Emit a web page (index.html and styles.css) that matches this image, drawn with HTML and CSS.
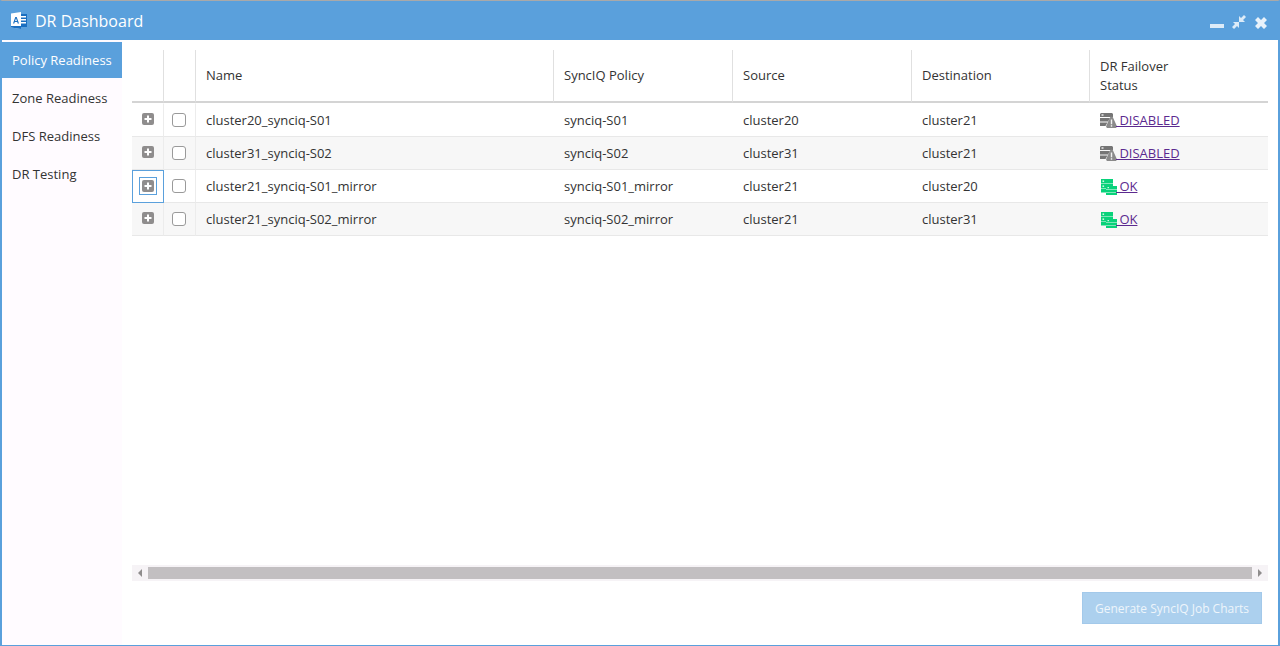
FILE: index.html
```html
<!DOCTYPE html>
<html lang="en">
<head>
<meta charset="utf-8">
<title>DR Dashboard</title>
<link rel="stylesheet" href="styles.css">
</head>
<body>
<svg class="defs" width="0" height="0" aria-hidden="true">
  <defs>
    <symbol id="plus" viewBox="0 0 12 12">
      <rect width="12" height="12" rx="2" fill="#8f8d8d"/>
      <path d="M5 2.500h2V5h2.500v2H7v2.500H5V7H2.500V5H5z" fill="#fff"/>
    </symbol>
    <symbol id="warn" viewBox="0 0 17 15">
      <path d="M1 0h11l1 1v3H0V1z" fill="#757575"/>
      <path d="M0 5h10L8 8.500H0z" fill="#757575"/>
      <path d="M0 9.500h7.500L5.500 13H0z" fill="#757575"/>
      <rect x="1.500" y="1.200" width="2" height="1.600" fill="#e2e2e2"/>
      <path d="M11.500 3.500c.7 0 1.200.4 1.500.9l3.700 8.300c.5 1.100-.2 2.300-1.400 2.300H7.700c-1.200 0-1.900-1.200-1.400-2.300L10 4.400c.3-.5.800-.9 1.500-.9z" fill="#8a8a8a"/>
      <rect x="10.800" y="6.500" width="1.400" height="4.800" fill="#f2f2f2"/>
      <rect x="10.800" y="12.200" width="1.400" height="1.500" fill="#f2f2f2"/>
    </symbol>
    <symbol id="okay" viewBox="0 0 16 16">
      <path d="M0 0h12v4.400H0zM0 5h12v2H5v2.400H0zM0 10h5v3.500H0z" fill="#08d27a"/>
      <path d="M5 7h11v3.200H5zM5 10.800h11v2.600H5zM5 14h11v2H5z" fill="#08d27a"/>
      <rect x="1.500" y="1.400" width="1.600" height="1.600" fill="#c9f7e1"/>
      <rect x="1.500" y="6.400" width="1.600" height="1.600" fill="#c9f7e1"/>
      <rect x="6.500" y="8" width="1.500" height="1.200" fill="#c9f7e1"/>
    </symbol>
  </defs>
</svg>
<div class="window">
  <header class="titlebar">
    <div class="title">
      <svg class="app-icon" width="16" height="17" viewBox="0 0 16 17" aria-hidden="true">
        <path d="M9 2h7v13H9z" fill="#1a6fc0"/>
        <path d="M10 4h5v1.500h-5zM10 7h5v1.500h-5zM10 10h5v1.500h-5z" fill="#fff"/>
        <path d="M0 1.500 10 0v17L0 15.500z" fill="#fff"/>
        <path d="M0 14h10v3L0 15.500z" fill="#1a6fc0"/>
        <path d="M2 11.500 4.300 5h1.400L8 11.500H6.700l-.5-1.500H3.800l-.5 1.500zM4.100 9h1.800L5 6.300z" fill="#1a6fc0"/>
      </svg>
      <span>DR Dashboard</span>
    </div>
    <div class="controls">
      <svg class="ctl-min" width="14" height="4" viewBox="0 0 14 4" aria-hidden="true"><rect width="14" height="4" fill="#dcebf8"/></svg>
      <svg class="ctl-restore" width="14" height="14" viewBox="0 0 14 14" aria-hidden="true"><path d="M12 0l2 2-3 3 2 2H7V1l2 2zM1 7h6v6l-2-2-3 3-2-2 3-3z" fill="#dcebf8"/></svg>
      <svg class="ctl-close" width="12" height="12" viewBox="0 0 12 12" aria-hidden="true"><path d="M0 3l3-3 3 3 3-3 3 3-3 3 3 3-3 3-3-3-3 3-3-3 3-3z" fill="#e8f2fb"/></svg>
    </div>
  </header>
  <div class="content">
    <nav class="sidebar">
      <a class="nav-item active">Policy Readiness</a>
      <a class="nav-item">Zone Readiness</a>
      <a class="nav-item">DFS Readiness</a>
      <a class="nav-item">DR Testing</a>
    </nav>
    <main class="main">
      <div class="grid-area">
        <table class="grid">
          <colgroup>
            <col class="c-expand"><col class="c-check"><col class="c-name"><col class="c-policy"><col class="c-source"><col class="c-dest"><col class="c-status">
          </colgroup>
          <thead>
            <tr><th></th><th></th><th>Name</th><th>SyncIQ Policy</th><th>Source</th><th>Destination</th><th>DR Failover<br>Status</th></tr>
          </thead>
          <tbody>
            <tr>
              <td class="icon-cell"><svg class="plus"><use href="#plus"/></svg></td>
              <td class="icon-cell"><span class="check"></span></td>
              <td>cluster20_synciq-S01</td><td>synciq-S01</td><td>cluster20</td><td>cluster21</td>
              <td><a class="status"><svg class="status-icon warn"><use href="#warn"/></svg> DISABLED</a></td>
            </tr>
            <tr class="alt">
              <td class="icon-cell"><svg class="plus"><use href="#plus"/></svg></td>
              <td class="icon-cell"><span class="check"></span></td>
              <td>cluster31_synciq-S02</td><td>synciq-S02</td><td>cluster31</td><td>cluster21</td>
              <td><a class="status"><svg class="status-icon warn"><use href="#warn"/></svg> DISABLED</a></td>
            </tr>
            <tr>
              <td class="icon-cell focused"><span class="focus-box"><svg class="plus"><use href="#plus"/></svg></span></td>
              <td class="icon-cell"><span class="check"></span></td>
              <td>cluster21_synciq-S01_mirror</td><td>synciq-S01_mirror</td><td>cluster21</td><td>cluster20</td>
              <td><a class="status"><svg class="status-icon"><use href="#okay"/></svg> OK</a></td>
            </tr>
            <tr class="alt">
              <td class="icon-cell"><svg class="plus"><use href="#plus"/></svg></td>
              <td class="icon-cell"><span class="check"></span></td>
              <td>cluster21_synciq-S02_mirror</td><td>synciq-S02_mirror</td><td>cluster21</td><td>cluster31</td>
              <td><a class="status"><svg class="status-icon"><use href="#okay"/></svg> OK</a></td>
            </tr>
          </tbody>
        </table>
      </div>
      <div class="hscroll">
        <span class="arrow left"></span>
        <span class="thumb"></span>
        <span class="arrow right"></span>
      </div>
      <div class="actions">
        <button class="primary" disabled>Generate SyncIQ Job Charts</button>
      </div>
    </main>
  </div>
</div>
</body>
</html>
```
FILE: styles.css
```css
* { box-sizing: border-box; }
html, body { margin: 0; height: 100%; overflow: hidden; }
body { font-family: "Open Sans", "Liberation Sans", sans-serif; font-size: 13px; color: #333; background: #fff; }
.defs { position: absolute; }

.window {
  height: 646px;
  display: flex;
  flex-direction: column;
  border-top: 1px solid #a9a9a9;
  border-left: 2px solid #5aa0dc;
  border-right: 2px solid #5aa0dc;
  border-bottom: 1px solid #5aa0dc;
}
.titlebar {
  flex: 0 0 39px;
  margin: 0 -2px;
  padding: 0 13px 0 11px;
  background: #5aa0dc;
  display: flex;
  align-items: center;
  justify-content: space-between;
  color: #fff;
}
.title { display: flex; align-items: center; gap: 8px; font-size: 16px; }
.app-icon { display: block; }
.controls { display: flex; align-items: flex-start; height: 15px; margin-top: 4px; }
.controls svg { display: block; }
.ctl-min { margin-top: 9px; }
.ctl-restore { margin: 0 9px 0 8px; }
.ctl-close { margin-top: 2px; }

.content { flex: 1; display: flex; min-height: 0; }
.sidebar {
  flex: 0 0 120px;
  padding-top: 2px;
  background: #fffbff;
  display: flex;
  flex-direction: column;
  gap: 2px;
}
.nav-item { height: 36px; padding: 0 10px; display: flex; align-items: center; color: #333; white-space: nowrap; }
.nav-item.active { background: #5aa0dc; color: #fff; }

.main { flex: 1; min-width: 0; display: flex; flex-direction: column; padding: 10px 10px 0 10px; }
.grid-area { flex: 0 0 515px; }
.grid { width: 1136px; border-collapse: separate; border-spacing: 0; table-layout: fixed; }
.c-expand, .c-check { width: 32px; }
.c-name { width: 358px; }
.c-policy { width: 179px; }
.c-source { width: 179px; }
.c-dest { width: 178px; }
.c-status { width: 178px; }

.grid th {
  height: 53px;
  padding: 0 10px;
  font-weight: 400;
  text-align: left;
  line-height: 19px;
  border-bottom: 2px solid #d4d4d4;
  border-right: 1px solid #e0e0e0;
}
.grid th:last-child { border-right: 0; }
.grid td {
  height: 33px;
  padding: 0 10px;
  border-bottom: 1px solid #e8e8e8;
  white-space: nowrap;
}
.grid tbody tr:first-child td { height: 34px; border-top: 1px solid #fff; }
.grid td:nth-child(-n+2) { border-right: 1px solid #ececec; }
.alt td { background: #f7f7f7; }

.grid .icon-cell { padding: 0; position: relative; }
.plus { width: 12px; height: 12px; display: block; margin: -3px auto 0 10px; }
.check {
  display: block;
  width: 14px;
  height: 14px;
  margin: 0 auto 0 8px;
  background: #fff;
  border: 1px solid #9a9a9a;
  border-radius: 3px;
}
.grid .focused { outline: 1px solid #5aa0dc; outline-offset: -1px; }
.focus-box { display: block; width: 18px; height: 18px; margin: 0 0 0 7px; padding: 2px; border: 1px solid #5aa0dc; }
.focus-box .plus { margin: 0; }

.status { display: inline-block; color: #5b2a8f; text-decoration: underline; }
.status-icon { width: 16px; height: 16px; vertical-align: -4px; margin: 0 -1px 0 1px; }
.status-icon.warn { width: 17px; height: 15px; vertical-align: -3px; margin: 0 -1px 0 0; }

.hscroll {
  flex: 0 0 16px;
  display: flex;
  align-items: center;
  background: #f6f3f6;
  width: 1136px;
}
.thumb { flex: 1; height: 12px; background: #c2bfc1; }
.arrow { flex: 0 0 16px; display: flex; justify-content: center; }
.arrow::before { content: ""; border-top: 4px solid transparent; border-bottom: 4px solid transparent; }
.arrow.left::before { border-right: 4px solid #8f8d8d; }
.arrow.right::before { border-left: 4px solid #8f8d8d; }

.actions { display: flex; justify-content: flex-end; padding: 11px 6px 0 0; width: 1136px; }
.primary {
  width: 180px;
  height: 32px;
  padding: 0;
  font: 12px "Open Sans", "Liberation Sans", sans-serif;
  color: #eef5fb;
  background: #acd0ee;
  border: 1px solid #a3c9ea;
}
```
